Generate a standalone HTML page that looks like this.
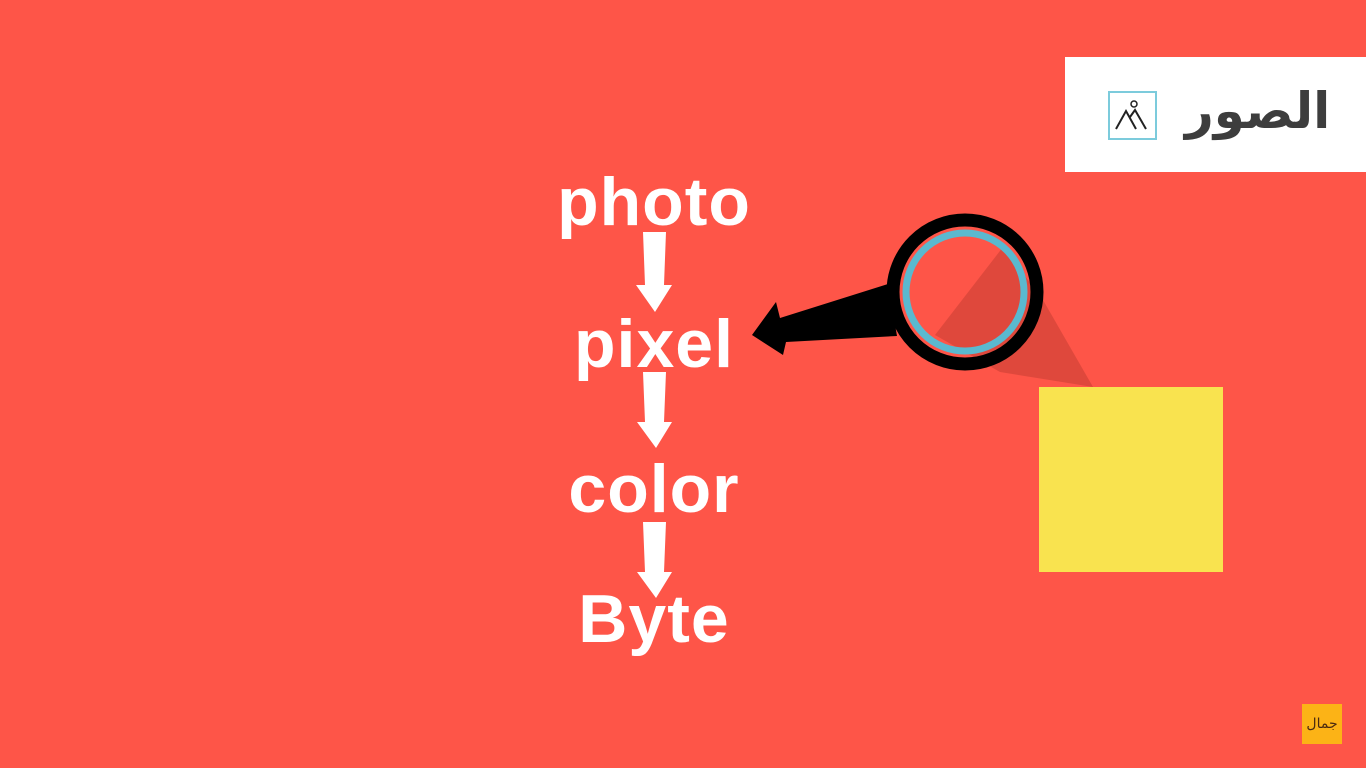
<!DOCTYPE html>
<html><head><meta charset="utf-8"><style>
body{margin:0;width:1366px;height:768px;background:#fe5548;overflow:hidden;position:relative;font-family:"Liberation Sans","DejaVu Sans",sans-serif}
.w{position:absolute;color:#fff;font-weight:bold;font-size:68px;letter-spacing:1px;text-align:center;width:300px;left:504px;line-height:1}
.box{position:absolute;left:1065px;top:57px;width:301px;height:115px;background:#fff}
.ar{position:absolute;left:1185px;top:82px;font:bold 50px "DejaVu Sans",sans-serif;color:#3d3d3d;direction:rtl}
</style></head><body>
<div class="w" style="top:168px">photo</div>
<div class="w" style="top:310px">pixel</div>
<div class="w" style="top:455px">color</div>
<div class="w" style="top:585px">Byte</div>
<svg width="1366" height="768" style="position:absolute;left:0;top:0">
<g fill="#fff">
<polygon points="643,232 666,232 664,285 672,285 655,312 636,285 645,285"/>
<polygon points="643,372 666,372 664,422 672,422 656,448 637,422 645,422"/>
<polygon points="643,522 666,522 664,572 672,572 656,598 637,572 645,572"/>
</g>
<rect x="1039" y="387" width="184" height="185" fill="#f9e34f"/>
<polygon points="1003,247 1043,300 1093,387 1000,372 935,335" fill="#d9473b" opacity=".85"/>
<polygon points="888,284 780,318 776,302 752,335 783,355 786,342 897,336" fill="#000"/>
<circle cx="965" cy="292" r="72" fill="none" stroke="#000" stroke-width="13"/>
<circle cx="965" cy="292" r="59" fill="none" stroke="#5ab9cf" stroke-width="7"/>
</svg>
<div class="box"></div>
<svg width="50" height="50" style="position:absolute;left:1108px;top:91px">
<rect x="1" y="1" width="47" height="47" fill="none" stroke="#7ccbdc" stroke-width="2"/>
<circle cx="26" cy="13" r="3" fill="none" stroke="#222" stroke-width="1.5"/>
<path d="M8 38 L18 20 L28 38 M22 26 L27 19 L38 38" fill="none" stroke="#222" stroke-width="2"/>
</svg>
<div class="ar">الصور</div>
<div style="position:absolute;left:1302px;top:704px;width:40px;height:40px;background:#fcb316;color:#4a2a10;font:14px 'DejaVu Sans',sans-serif;text-align:center;line-height:40px">جمال</div>
</body></html>
